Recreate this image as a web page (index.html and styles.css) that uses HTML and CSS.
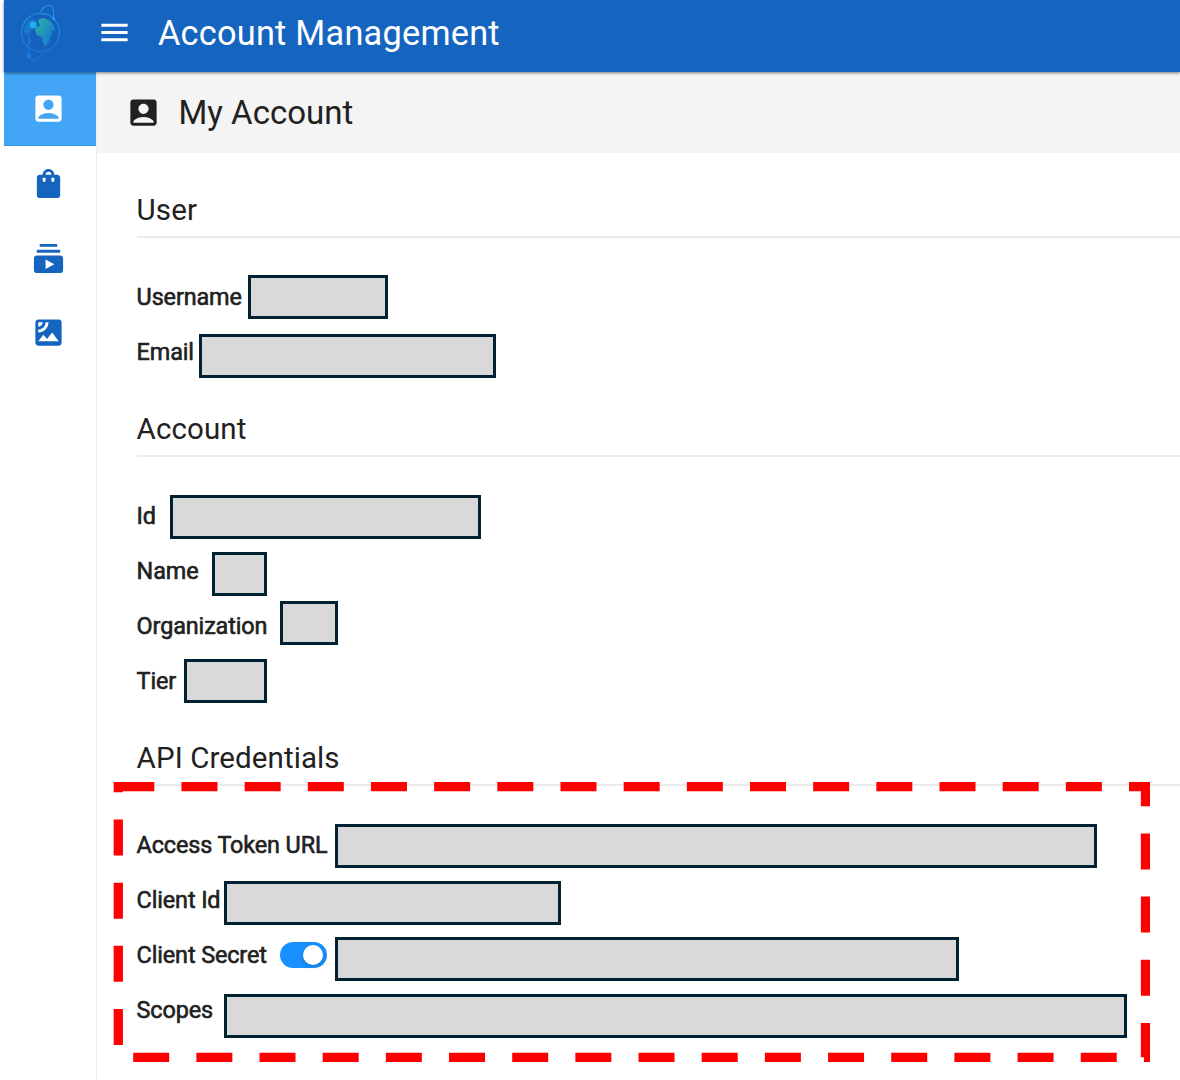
FILE: index.html
```html
<!DOCTYPE html>
<html lang="en">
<head>
<meta charset="utf-8">
<title>Account Management</title>
<link rel="stylesheet" href="styles.css">
</head>
<body>
<div class="app">
  <header class="topbar">
    <svg class="logo" viewBox="0 0 50 64" width="50" height="64">
      <defs>
        <linearGradient id="ring" x1="0" y1="0" x2="0" y2="1"><stop offset="0" stop-color="#2196e0"/><stop offset="1" stop-color="#1b75e0"/></linearGradient>
        <linearGradient id="land" x1="0" y1="0.2" x2="0.8" y2="1"><stop offset="0" stop-color="#27b3a8"/><stop offset="0.5" stop-color="#2090bd"/><stop offset="1" stop-color="#1976d2"/></linearGradient>
      </defs>
      <circle cx="24.5" cy="32.500" r="19" fill="#1562bd" stroke="url(#ring)" stroke-width="1.200"/>
      <path d="M22 20l5-2 6 2 4 4 2 5-1 2-3-1 1 4-2 3-1 5-4 5-2-4-1-6-5-2-2-5 2-3 3-1z" fill="url(#land)"/>
      <path d="M9 26l3-5 5-3 3 2-2 7-3 2-2 4-3 2-2-3zM12 37l3 2-1 5-2-2z" fill="#1b78c6"/>
      <path d="M24.500 12C28 6 32 4 35 6c3 2 3 7 2.500 13" fill="none" stroke="#1f97e2" stroke-width="1.100"/>
      <circle cx="37.500" cy="18.500" r="1.200" fill="#1db8f2"/>
      <path d="M16 25C12 37 11.500 46 12.500 56c2 4 4 5 7 4 3-1 5-4 6-7" fill="none" stroke="#1c7ae0" stroke-width="1"/>
      <circle cx="17.300" cy="25" r="3.500" fill="#1fb0f0"/>
      <circle cx="12.800" cy="55.700" r="2.300" fill="#1c80ea"/>
    </svg>
    <svg class="icon menu" viewBox="0 0 24 24"><path d="M3 18h18v-2H3v2zm0-5h18v-2H3v2zm0-7v2h18V6H3z"/></svg>
    <div class="app-title">Account Management</div>
  </header>
  <div class="body">
    <nav class="sidebar">
      <a class="nav-item active"><svg class="icon" viewBox="0 0 24 24"><path d="M19 3H5c-1.100 0-2 .9-2 2v14c0 1.100.9 2 2 2h14c1.100 0 2-.9 2-2V5c0-1.100-.9-2-2-2zm-7 3c1.930 0 3.500 1.570 3.500 3.500S13.930 13 12 13s-3.500-1.570-3.500-3.500S10.070 6 12 6zm7 13H5v-.23c0-.62.28-1.200.76-1.580C7.470 15.820 9.640 15 12 15s4.530.82 6.240 2.190c.48.38.76.97.76 1.580V19z"/></svg></a>
      <a class="nav-item"><svg class="icon" viewBox="0 0 24 24"><path d="M18 6h-2c0-2.210-1.790-4-4-4S8 3.790 8 6H6c-1.100 0-2 .9-2 2v12c0 1.100.9 2 2 2h12c1.100 0 2-.9 2-2V8c0-1.100-.9-2-2-2zm-8 4c0 .55-.45 1-1 1s-1-.45-1-1V8h2v2zm2-6c1.100 0 2 .9 2 2h-4c0-1.100.9-2 2-2zm4 6c0 .55-.45 1-1 1s-1-.45-1-1V8h2v2z"/></svg></a>
      <a class="nav-item"><svg class="icon" viewBox="0 0 24 24"><path d="M20 8H4V6h16v2zm-2-6H6v2h12V2zm4 10v8c0 1.100-.9 2-2 2H4c-1.100 0-2-.9-2-2v-8c0-1.100.9-2 2-2h16c1.100 0 2 .9 2 2zm-6 4l-6-3.270v6.530L16 16z"/></svg></a>
      <a class="nav-item"><svg class="icon" viewBox="0 0 24 24"><path d="M19 3H5c-1.100 0-2 .9-2 2v14c0 1.100.9 2 2 2h14c1.100 0 2-.9 2-2V5c0-1.100-.9-2-2-2zM5 4.990h3C8 6.650 6.660 8 5 8V4.990zM5 12v-2c2.760 0 5-2.250 5-5.010h2C12 8.860 8.870 12 5 12zm0 6l3.500-4.500 2.500 3.010L14.500 12l4.500 6H5z"/></svg></a>
    </nav>
    <main class="main">
      <div class="page-head">
        <svg class="icon" viewBox="0 0 24 24"><path d="M19 3H5c-1.100 0-2 .9-2 2v14c0 1.100.9 2 2 2h14c1.100 0 2-.9 2-2V5c0-1.100-.9-2-2-2zm-7 3c1.930 0 3.500 1.570 3.500 3.500S13.930 13 12 13s-3.500-1.570-3.500-3.500S10.070 6 12 6zm7 13H5v-.23c0-.62.28-1.200.76-1.580C7.470 15.820 9.640 15 12 15s4.530.82 6.240 2.190c.48.38.76.97.76 1.580V19z"/></svg>
        <h1>My Account</h1>
      </div>
      <div class="sections">
        <section>
          <h2>User</h2>
          <div class="row"><span class="label w-username">Username</span><span class="value v-username"></span></div>
          <div class="row"><span class="label w-email">Email</span><span class="value v-email"></span></div>
        </section>
        <section>
          <h2>Account</h2>
          <div class="row"><span class="label w-id">Id</span><span class="value v-id"></span></div>
          <div class="row"><span class="label w-name">Name</span><span class="value v-name"></span></div>
          <div class="row"><span class="label w-org">Organization</span><span class="value v-org"></span></div>
          <div class="row"><span class="label w-tier">Tier</span><span class="value v-tier"></span></div>
        </section>
        <section>
          <h2>API Credentials</h2>
          <div class="row"><span class="label w-url">Access Token URL</span><span class="value v-url"></span></div>
          <div class="row"><span class="label w-client">Client Id</span><span class="value v-client"></span></div>
          <div class="row"><span class="label w-secret">Client Secret</span><span class="switch"><span class="knob"></span></span><span class="value v-secret"></span></div>
          <div class="row"><span class="label w-scopes">Scopes</span><span class="value v-scopes"></span></div>
        </section>
      </div>
    </main>
  </div>
  <svg class="highlight" viewBox="0 0 1040 284" width="1040" height="284"><path d="M8.300 6.700H1035.500V277.300H8.300Z" fill="none" stroke="#f00" stroke-width="9.300" stroke-dasharray="36 27.170"/></svg>
</div>
</body>
</html>
```
FILE: styles.css
```css
* { box-sizing: border-box; }

body {
  margin: 0;
  background: #fff;
  color: #212121;
  font-family: Roboto, "Liberation Sans", sans-serif;
}

.app {
  position: relative;
  height: 1080px;
  padding-left: 4px;
  display: flex;
  flex-direction: column;
  overflow: hidden;
}

.icon {
  display: block;
  flex: none;
  width: 35px;
  height: 35px;
  fill: currentColor;
}

.topbar {
  position: relative;
  z-index: 1;
  flex: none;
  display: flex;
  align-items: flex-start;
  height: 71.500px;
  background: #1565c0;
  color: #fff;
  box-shadow: 0 1px 3px rgba(0, 0, 0, .5);
}

.logo { margin-left: 12px; }

.menu { margin: 15px 0 0 31px; }

.app-title {
  margin: 13px 0 0 26px;
  font-size: 34.3px;
  letter-spacing: .24px;
  line-height: 40px;
}

.body {
  flex: 1;
  display: flex;
}

.sidebar {
  flex: none;
  width: 93px;
  border-right: 1px solid #eee;
  color: #1565c0;
}

.nav-item {
  display: flex;
  align-items: center;
  justify-content: center;
  height: 74.5px;
  width: 92px;
  padding: 1px 4px 0 0;
}

.nav-item.active {
  background: #42a5f5;
  border-bottom: 1px solid #3497ec;
  color: #fff;
}

.main {
  flex: 1;
  min-width: 0;
}

.page-head {
  display: flex;
  align-items: center;
  height: 81.5px;
  padding-left: 29px;
  background: #f4f4f4;
}

.page-head h1 {
  margin: 0 0 0 17.500px;
  font-size: 33px;
  font-weight: 400;
}

.sections {
  display: flex;
  flex-direction: column;
  gap: 30.800px;
  padding: 38px 0 0 39.600px;
}

h2 {
  height: 47px;
  margin: 0 0 32px;
  padding-top: 1px;
  border-bottom: 2px solid #ebebeb;
  font-size: 29.500px;
  font-weight: 400;
  letter-spacing: .1px;
  line-height: 37px;
}

.row {
  display: flex;
  align-items: flex-start;
  height: 54.800px;
}

.label {
  flex: none;
  font-size: 23.400px;
  letter-spacing: -.12px;
  line-height: 55.200px;
  white-space: nowrap;
  -webkit-text-stroke: .6px currentColor;
}

.value {
  flex: none;
  height: 44px;
  border: 3px solid #002233;
  background: #d9d9d9;
}

.w-username { width: 111.400px; }
.w-email { width: 62.400px; }
.w-id { width: 33.400px; }
.w-name { width: 75.400px; }
.w-org { width: 143.400px; }
.w-tier { width: 47.400px; }
.w-url { width: 198.400px; }
.w-client { width: 87.400px; }
.w-secret { width: 143.400px; }
.w-scopes { width: 87.400px; }

.v-username { width: 140px; margin-top: 5px; }
.v-email { width: 297px; margin-top: 9.200px; }
.v-id { width: 311px; margin-top: 6px; }
.v-name { width: 55px; margin-top: 7.700px; }
.v-org { width: 58.500px; margin-top: 2px; }
.v-tier { width: 83px; margin-top: 5.200px; }
.v-url { width: 762px; margin-top: 6px; }
.v-client { width: 337px; margin-top: 7.700px; }
.v-secret { width: 624px; margin: 9px 0 0 8px; }
.v-scopes { width: 903px; margin-top: 11.700px; }

.switch {
  display: flex;
  justify-content: flex-end;
  align-items: center;
  width: 47px;
  height: 26px;
  margin-top: 14px;
  padding-right: 3.500px;
  border-radius: 13px;
  background: #1890ff;
}

.knob {
  width: 20px;
  height: 20px;
  border-radius: 50%;
  background: #fff;
  box-shadow: 0 2px 4px rgba(0, 35, 11, .2);
}

/* Callout frame laid over the credentials section */
.highlight {
  position: absolute;
  left: 110px;
  top: 780px;
}
```
